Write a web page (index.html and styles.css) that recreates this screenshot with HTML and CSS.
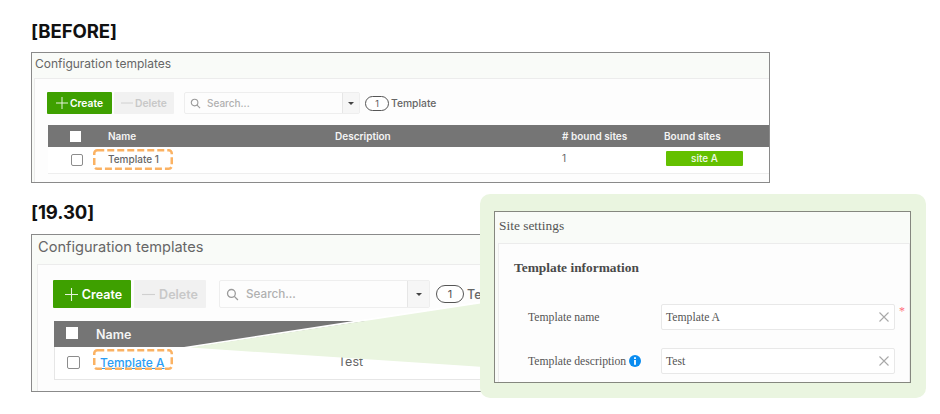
FILE: index.html
```html
<!DOCTYPE html>
<html lang="en">
<head>
<meta charset="utf-8">
<title>Configuration templates</title>
<link rel="stylesheet" href="styles.css">
</head>
<body>
<h2 class="title">[BEFORE]</h2>
<section class="panel">
  <div class="panel-head">Configuration templates</div>
  <div class="card">
    <div class="toolbar">
      <button class="btn create"><svg class="ico" viewBox="0 0 12 12"><path d="M6 0v12M0 6h12"/></svg>Create</button>
      <button class="btn delete"><svg class="ico" viewBox="0 0 12 12"><path d="M0 6h12"/></svg>Delete</button>
      <div class="search">
        <svg class="lens" viewBox="0 0 12 12"><circle cx="5" cy="5" r="3.6"/><path d="M7.7 7.7 11 11"/></svg>
        <span class="ph">Search...</span>
        <span class="drop"><i class="caret"></i></span>
      </div>
      <span class="pill">1</span><span class="count">Template</span>
    </div>
    <div class="row head">
      <span class="cell-check"><i class="check solid"></i></span>
      <span>Name</span><span>Description</span><span># bound sites</span><span>Bound sites</span>
    </div>
    <div class="row body">
      <span class="cell-check"><i class="check"></i></span>
      <span class="hl"><svg class="dash" viewBox="0 0 80 21"><rect x="1.25" y="1.25" width="77.5" height="18.5" rx="3"/></svg><span>Template 1</span></span><span></span><span class="num">1</span><span class="badge">site A</span>
    </div>
  </div>
</section>

<h2 class="title second">[19.30]</h2>
<section class="panel large">
  <div class="panel-head">Configuration templates</div>
  <div class="card">
    <div class="toolbar">
      <button class="btn create"><svg class="ico" viewBox="0 0 12 12"><path d="M6 0v12M0 6h12"/></svg>Create</button>
      <button class="btn delete"><svg class="ico" viewBox="0 0 12 12"><path d="M0 6h12"/></svg>Delete</button>
      <div class="search">
        <svg class="lens" viewBox="0 0 12 12"><circle cx="5" cy="5" r="3.6"/><path d="M7.7 7.7 11 11"/></svg>
        <span class="ph">Search...</span>
        <span class="drop"><i class="caret"></i></span>
      </div>
      <span class="pill">1</span><span class="count">Template</span>
    </div>
    <div class="row head">
      <span class="cell-check"><i class="check solid"></i></span>
      <span>Name</span><span></span>
    </div>
    <div class="row body">
      <span class="cell-check"><i class="check"></i></span>
      <span class="hl"><svg class="dash" viewBox="0 0 80 21"><rect x="1.25" y="1.25" width="77.5" height="18.5" rx="3"/></svg><a class="link">Template A</a></span><span class="desc">Test</span>
    </div>
  </div>
</section>

<svg class="wedge" viewBox="0 0 300 70" aria-hidden="true"><polygon class="wedge-gap" points="0,47 300,1 300,3 0,49"/><polygon class="wedge-fill" points="6,47.5 300,3 300,67"/></svg>

<aside class="callout">
  <div class="site">
    <div class="site-head">Site settings</div>
    <div class="site-card">
      <h3 class="site-title">Template information</h3>
      <div class="field first">
        <label class="field-label">Template name</label>
        <div class="input"><span>Template A</span><svg class="x" viewBox="0 0 10 10"><path d="M.5.5l9 9M9.5.5l-9 9"/></svg></div>
        <span class="req">*</span>
      </div>
      <div class="field">
        <label class="field-label">Template description<svg class="info" viewBox="0 0 12 12"><circle cx="6" cy="6" r="6"/><rect x="5.1" y="2.2" width="1.8" height="1.8"/><rect x="5.1" y="5" width="1.8" height="4.8"/></svg></label>
        <div class="input"><span>Test</span><svg class="x" viewBox="0 0 10 10"><path d="M.5.5l9 9M9.5.5l-9 9"/></svg></div>
      </div>
    </div>
  </div>
</aside>
</body>
</html>
```
FILE: styles.css
```css
* { box-sizing: border-box; }
html, body { margin: 0; height: 414px; overflow: hidden; background: #fff; }
body { position: relative; padding: 20px 0 0 31px; font-family: Inter, "Liberation Sans", sans-serif; }

.title { margin: 0 0 8px; height: 24px; font-size: 18.6px; line-height: 23px; font-weight: 700; color: #111; letter-spacing: -0.1px; }
.title.second { margin: 18px 0 9px; }

.panel { width: 739px; height: 131px; border: 1px solid #8a8a8a; background: #f9fbf8; overflow: hidden; }
.panel-head { height: 25px; padding-left: 3px; font-size: 12px; line-height: 21px; color: #666; }
.card { margin-left: 2px; height: 100%; padding: 13px 0 0 13px; background: #fdfdfd; border-top: 1px solid #ececec; border-left: 1px solid #ececec; }

.toolbar { display: flex; align-items: center; height: 22px; margin-left: -1px; }
.btn { display: flex; align-items: center; justify-content: center; height: 100%; padding: 0; border: 0; border-radius: 1px; font: 600 10.3px Inter, "Liberation Sans", sans-serif; }
.ico { width: 12px; height: 12px; margin-right: 2px; fill: none; stroke-width: 1; }
.create { width: 65px; margin-right: 2px; background: #3ea000; color: #fff; }
.create .ico { stroke: #e6f3dc; }
.delete { width: 60px; margin-right: 10px; background: #f1f1f1; color: #c8c8c8; }
.delete .ico { stroke: #d0d0d0; }
.search { display: flex; align-items: center; width: 176px; height: 100%; padding-left: 5px; background: #fdfdfd; border: 1px solid #eee; border-radius: 2px; }
.lens { flex: none; width: 11px; height: 11px; fill: none; stroke: #9a9a9a; stroke-width: 1.2; }
.ph { flex: 1; margin-left: 6px; font-size: 10px; font-weight: 500; color: #b0b0b0; }
.drop { display: flex; align-items: center; justify-content: center; flex: none; width: 17px; height: 100%; background: #f6f6f6; border-left: 1px solid #e6e6e6; }
.caret { width: 0; height: 0; border: 3px solid transparent; border-top: 3.5px solid #444; border-bottom: 0; }
.pill { display: flex; align-items: center; justify-content: center; width: 24px; height: 15px; margin-left: 5px; border: 1px solid #555; border-radius: 8px; background: #fff; font-size: 9px; color: #555; }
.count { margin-left: 2px; font-size: 10.3px; font-weight: 500; color: #666; }

.row { display: grid; grid-template-columns: 60px 227px 227px 102px 1fr; align-items: center; font-size: 10px; }
.head { height: 22px; margin: 11px 0 0 0; background: #757575; color: #f4f4f4; font-weight: 600; }
.body { height: 27px; padding-bottom: 1px; background: #fff; border-bottom: 1px solid #eee; color: #666; font-weight: 500; }
.cell-check { display: flex; padding-left: 23px; }
.check { width: 12px; height: 12px; border: 1px solid #8c8c8c; border-radius: 2px; background: #fff; }
.check.solid { width: 11px; height: 11px; margin-left: -1px; border: 0; border-radius: 0; }
.hl { position: relative; display: flex; align-items: center; width: 80px; height: 21px; margin-left: -15px; padding: 0 0 1px 15px; color: #666; white-space: nowrap; }
.dash { position: absolute; left: 0; top: 0; width: 80px; height: 21px; fill: none; stroke: #fbb263; stroke-width: 2.5; stroke-dasharray: 7 3; }
.num { margin-bottom: 3px; font-weight: 400; }
.badge { width: 77px; height: 15px; margin: 0 0 3px 2px; background: #64c000; border-radius: 1px; color: #f2f9ea; text-align: center; line-height: 15px; }

.large { height: 158px; }
.large .panel-head { height: 29px; padding-left: 6px; font-size: 14.6px; line-height: 25px; }
.large .card { margin-left: 5px; padding: 15px 0 0 16px; }
.large .toolbar { height: 28px; }
.large .btn { font-size: 12.5px; }
.large .ico { width: 13px; height: 13px; margin-right: 4px; }
.large .create { width: 78px; margin-right: 3px; padding-left: 3px; }
.large .delete { width: 72px; margin-right: 13px; }
.large .search { width: 211px; padding-left: 6px; }
.large .lens { width: 13px; height: 13px; }
.large .ph { margin-left: 7px; font-size: 11.7px; }
.large .drop { width: 22px; }
.large .pill { width: 28px; height: 18px; margin-left: 6px; border-radius: 9px; font-size: 11px; }
.large .count { margin-left: 3px; font-size: 12.5px; }
.large .row { grid-template-columns: 42px 242px 1fr; }
.large .head { height: 26px; margin-top: 13px; font-size: 12.5px; }
.large .body { grid-template-columns: 41px 242px 1fr; height: 33px; padding-bottom: 0; border-bottom: 1px solid #e6e6e6; border-left: 1px solid #e6e6e6; font-size: 12px; }
.large .cell-check { margin-bottom: 2px; padding-left: 12px; }
.large .check { width: 13px; height: 13px; }
.large .check.solid { width: 12px; height: 12px; margin-left: 0; margin-bottom: 0; }
.large .hl { align-self: start; margin: 2px 0 0 -3px; padding: 5px 0 0 7px; }
.large .desc { margin-bottom: 3px; font-size: 12.5px; font-weight: 400; }
.link { color: #2a9df4; text-decoration: underline; text-underline-offset: 1px; }

.wedge { position: absolute; left: 184px; top: 300px; width: 300px; height: 70px; }
.wedge-gap { fill: #fff; }
.wedge-fill { fill: #eaf5e0; }

.callout { position: absolute; left: 480px; top: 194px; width: 446px; height: 204px; padding: 17px 15px 15px 14px; background: #eaf5e0; border-radius: 10px; }
.site { height: 100%; border: 1px solid #85877f; background: #f9fbf8; overflow: hidden; font-family: "Liberation Serif", serif; color: #555; }
.site-head { height: 31px; padding-left: 4px; font-size: 13.4px; line-height: 27px; }
.site-card { height: 100%; margin-left: 3px; padding: 16px 0 0 15px; background: #fdfdfd; border: 1px solid #ececec; }
.site-title { margin: 0; height: 16px; font-size: 13.4px; line-height: 16px; font-weight: 700; color: #4a4a4a; }
.field { position: relative; display: flex; align-items: center; height: 26px; margin: 18px 0 0 14px; font-size: 11.7px; }
.field.first { margin-top: 28px; }
.field-label { display: flex; align-items: center; width: 133px; flex: none; }
.input { display: flex; align-items: center; justify-content: space-between; width: 234px; height: 100%; padding: 0 5px 0 4px; background: #fff; border: 1px solid #e8e8e8; border-radius: 2px; }
.x { width: 10px; height: 10px; fill: none; stroke: #a8a8a8; stroke-width: 1.1; }
.req { position: absolute; left: 371px; top: 0; font-size: 12px; color: #ff6b7a; }
.info { width: 12px; height: 12px; margin-left: 3px; fill: #fff; }
.info circle { fill: #0a8cf0; }
```
